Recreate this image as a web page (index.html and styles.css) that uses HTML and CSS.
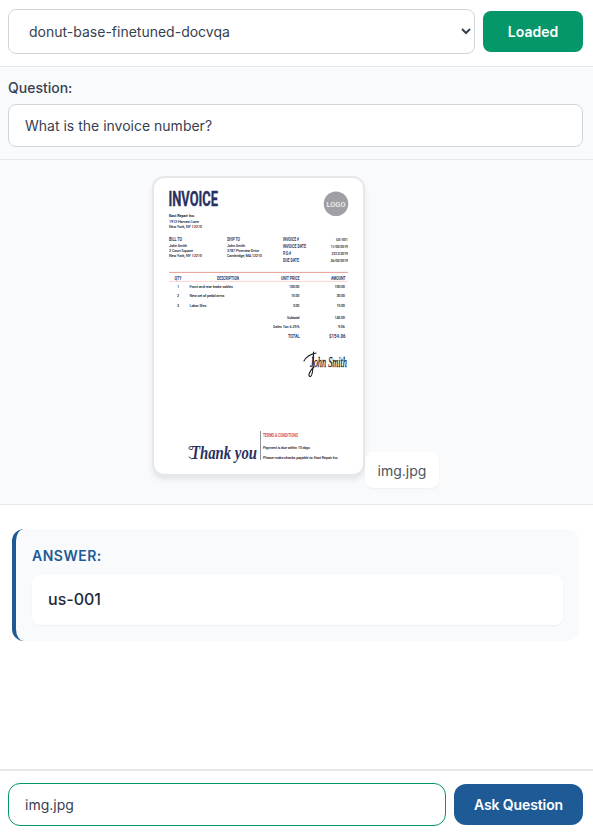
FILE: index.html
```html
<!DOCTYPE html>
<html lang="en">
<head>
<meta charset="utf-8">
<title>Document Question Answering</title>
<link rel="stylesheet" href="styles.css">
</head>
<body>
<header class="model-bar">
  <select class="model-select" aria-label="Model"><option>donut-base-finetuned-docvqa</option></select>
  <button class="btn btn-loaded">Loaded</button>
</header>
<section class="question">
  <label class="question-label" for="question">Question:</label>
  <input class="field" id="question" type="text" value="What is the invoice number?">
</section>
<section class="preview">
  <svg class="invoice" viewBox="154 178 209 296" role="img" aria-label="Invoice">
    <g class="heading">
      <text class="title" x="168.5" y="206.300" textLength="49.5" lengthAdjust="spacingAndGlyphs">INVOICE</text>
      <text x="169" y="240.8" textLength="13" lengthAdjust="spacingAndGlyphs">BILL TO</text>
      <text x="227" y="240.8" textLength="13" lengthAdjust="spacingAndGlyphs">SHIP TO</text>
      <text x="283" y="240.8" textLength="16" lengthAdjust="spacingAndGlyphs">INVOICE #</text>
      <text x="283" y="248" textLength="23" lengthAdjust="spacingAndGlyphs">INVOICE DATE</text>
      <text x="283" y="255.2" textLength="8" lengthAdjust="spacingAndGlyphs">P.O.#</text>
      <text x="283" y="262.3" textLength="16" lengthAdjust="spacingAndGlyphs">DUE DATE</text>
      <text x="174.5" y="279.7" textLength="7" lengthAdjust="spacingAndGlyphs">QTY</text>
      <text x="217" y="279.7" textLength="22" lengthAdjust="spacingAndGlyphs">DESCRIPTION</text>
      <text x="281" y="279.7" textLength="18.5" lengthAdjust="spacingAndGlyphs">UNIT PRICE</text>
      <text x="331" y="279.7" textLength="14.5" lengthAdjust="spacingAndGlyphs">AMOUNT</text>
      <text x="288" y="338" textLength="11.5" lengthAdjust="spacingAndGlyphs">TOTAL</text>
      <text x="329" y="338" textLength="16.5" lengthAdjust="spacingAndGlyphs">$154.06</text>
    </g>
    <circle class="logo-disc" cx="336" cy="203.8" r="12.3"/>
    <text class="logo-text" x="326.5" y="206.5" textLength="19" lengthAdjust="spacingAndGlyphs">LOGO</text>
    <g class="small">
      <text class="strong" x="169" y="217.2" textLength="26">East Repair Inc.</text>
      <text x="169" y="223" textLength="30">1912 Harvest Lane</text>
      <text x="169" y="228.3" textLength="33">New York, NY 12210</text>
      <text x="169" y="247" textLength="18">John Smith</text>
      <text x="169" y="252.2" textLength="24">2 Court Square</text>
      <text x="169" y="257.2" textLength="33">New York, NY 12210</text>
      <text x="227" y="247" textLength="18">John Smith</text>
      <text x="227" y="252.2" textLength="32">3787 Pineview Drive</text>
      <text x="227" y="257.2" textLength="35">Cambridge, MA 12210</text>
      <text x="336" y="240.8" textLength="12">US-001</text>
      <text x="330.5" y="248" textLength="17.5">11/02/2019</text>
      <text x="331.5" y="255.2" textLength="16.5">2312/2019</text>
      <text x="330.5" y="262.3" textLength="17.5">26/02/2019</text>
      <text x="177" y="288.3">1</text>
      <text x="177" y="297.4">2</text>
      <text x="177" y="306.6">3</text>
      <text x="189.5" y="288.3" textLength="43.5">Front and rear brake cables</text>
      <text x="189.5" y="297.4" textLength="35">New set of pedal arms</text>
      <text x="189.5" y="306.6" textLength="17">Labor 3hrs</text>
      <text x="289" y="288.3" textLength="10.5">100.00</text>
      <text x="291" y="297.4" textLength="8.5">15.00</text>
      <text x="293" y="306.6" textLength="6.5">5.00</text>
      <text x="334.5" y="288.3" textLength="10.5">100.00</text>
      <text x="336.5" y="297.4" textLength="8.5">30.00</text>
      <text x="336.5" y="306.6" textLength="8.5">15.00</text>
      <text x="287" y="318.6" textLength="12.5">Subtotal</text>
      <text x="334.5" y="318.6" textLength="10.5">145.00</text>
      <text x="273" y="327.8" textLength="26.5">Sales Tax 6.25%</text>
      <text x="338" y="327.8" textLength="7">9.06</text>
      <text x="263" y="448.5" textLength="47">Payment is due within 15 days</text>
      <text x="263" y="458.5" textLength="75.5">Please make checks payable to: East Repair Inc.</text>
    </g>
    <path class="rule" d="M169 272.4H348"/>
    <path class="rule rule-light" d="M169 281.4H348"/>
    <text class="signature" x="310" y="367" textLength="37" lengthAdjust="spacingAndGlyphs">John Smith</text>
    <path class="pen" d="M304 361Q307 355 316 353M313.500 352C313 360 314 375 310.500 376.500C307 377 310 370 314 367"/>
    <text class="thanks" x="191" y="459" textLength="66" lengthAdjust="spacingAndGlyphs">Thank you</text>
    <path class="swash" d="M192 449.500C187 450 188 445.500 193 446.500M189 457Q191 460 194 458.500"/>
    <path class="divider" d="M260.500 431V460"/>
    <text class="terms" x="263" y="436.800" textLength="35" lengthAdjust="spacingAndGlyphs">TERMS &amp; CONDITIONS</text>
  </svg>
  <span class="file-chip">img.jpg</span>
</section>
<main class="result">
  <div class="answer">
    <div class="answer-label">Answer:</div>
    <div class="answer-text">us-001</div>
  </div>
</main>
<footer class="ask-bar">
  <input class="field field-file" type="text" value="img.jpg" aria-label="File">
  <button class="btn btn-ask">Ask Question</button>
</footer>
</body>
</html>
```
FILE: styles.css
```css
* { box-sizing: border-box; }
body {
  margin: 0;
  height: 833px;
  display: flex;
  flex-direction: column;
  overflow: hidden;
  background: #fff;
  color: #374151;
  font: 14px/20px Inter, "Liberation Sans", sans-serif;
}
button, input, select { font: inherit; color: inherit; margin: 0; }

.model-bar {
  display: flex;
  align-items: center;
  gap: 8px;
  height: 67px;
  padding: 0 10px 3px 8px;
  border-bottom: 1px solid #e5e7eb;
}
.model-select {
  flex: 1;
  height: 45px;
  padding: 0 0 0 16px;
  background: #fff;
  border: 1px solid #d1d5db;
  border-radius: 8px;
}
.btn {
  height: 41px;
  padding: 0;
  border: 0;
  color: #fff;
  font-weight: 600;
}
.btn-loaded { width: 100px; border-radius: 8px; background: #059669; }
.btn-ask { width: 129px; border-radius: 12px; background: #1e5a96; letter-spacing: -.1px; }

.question {
  height: 93px;
  padding: 11px 10px 12px 8px;
  background: #f9fafb;
  border-bottom: 1px solid #e5e7eb;
}
.question-label { display: block; margin-bottom: 6px; font-weight: 500; }
.field {
  display: block;
  width: 100%;
  height: 43px;
  padding: 0 16px;
  background: #fff;
  border: 1px solid #d1d5db;
  border-radius: 8px;
}

.preview {
  display: flex;
  justify-content: center;
  align-items: flex-end;
  height: 345px;
  padding: 16px 2px 16px 0;
  background: #f9fafb;
  border-bottom: 1px solid #e5e7eb;
}
.invoice {
  width: 213px;
  height: 300px;
  margin-bottom: 12px;
  background: #fff;
  border: 2px solid #e5e7eb;
  border-radius: 12px;
  box-shadow: 0 4px 6px -1px rgba(0, 0, 0, .1);
}
.file-chip {
  width: 74px;
  height: 36px;
  padding: 9px 0 7px;
  border-radius: 8px;
  background: #fff;
  box-shadow: 0 1px 2px rgba(0, 0, 0, .05);
  color: #4b5563;
  text-align: center;
}
.heading { fill: #333a66; font: 700 6px Roboto, sans-serif; }
.title { fill: #28305f; font-size: 21px; stroke: #28305f; stroke-width: .35; }
.small { fill: #20222c; font: 500 3.8px Roboto, sans-serif; }
.strong { font-weight: 700; }
.logo-disc { fill: #9fa0a4; }
.logo-text { fill: #f1f1f2; font: 500 7.5px Roboto, sans-serif; }
.rule { stroke: #e38378; stroke-width: .8; }
.rule-light { stroke: #fac9c5; }
.signature { fill: #15161b; stroke: #15161b; stroke-width: .3; font: italic 15px "Liberation Serif", serif; }
.pen { fill: none; stroke: #15161b; stroke-width: 1.1; stroke-linecap: round; }
.thanks { fill: #28305f; font: italic 700 18px "Liberation Serif", serif; }
.swash { fill: none; stroke: #28305f; stroke-width: 1; stroke-linecap: round; }
.divider { stroke: #60647f; stroke-width: .7; }
.terms { fill: #d84e43; font: 700 5.5px Roboto, sans-serif; }

.result { flex: 1; padding: 24px 14px 0 12px; }
.answer {
  height: 112px;
  padding: 17px 16px 16px;
  background: #f9fafb;
  border-left: 4px solid #1e5a96;
  border-radius: 12px;
}
.answer-label {
  margin-bottom: 9px;
  color: #1e5a96;
  font-weight: 600;
  letter-spacing: .5px;
  text-transform: uppercase;
}
.answer-text {
  height: 50px;
  padding: 12px 16px;
  background: #fff;
  border-radius: 8px;
  box-shadow: 0 1px 2px rgba(0, 0, 0, .05);
  color: #1f2937;
  font-size: 16px;
  font-weight: 500;
  line-height: 24px;
}

.ask-bar {
  display: flex;
  align-items: center;
  gap: 8px;
  height: 64px;
  padding: 5px 10px 0 8px;
  border-top: 2px solid #e5e7eb;
}
.field-file { flex: 1; border-color: #059669; border-radius: 12px; }
```
